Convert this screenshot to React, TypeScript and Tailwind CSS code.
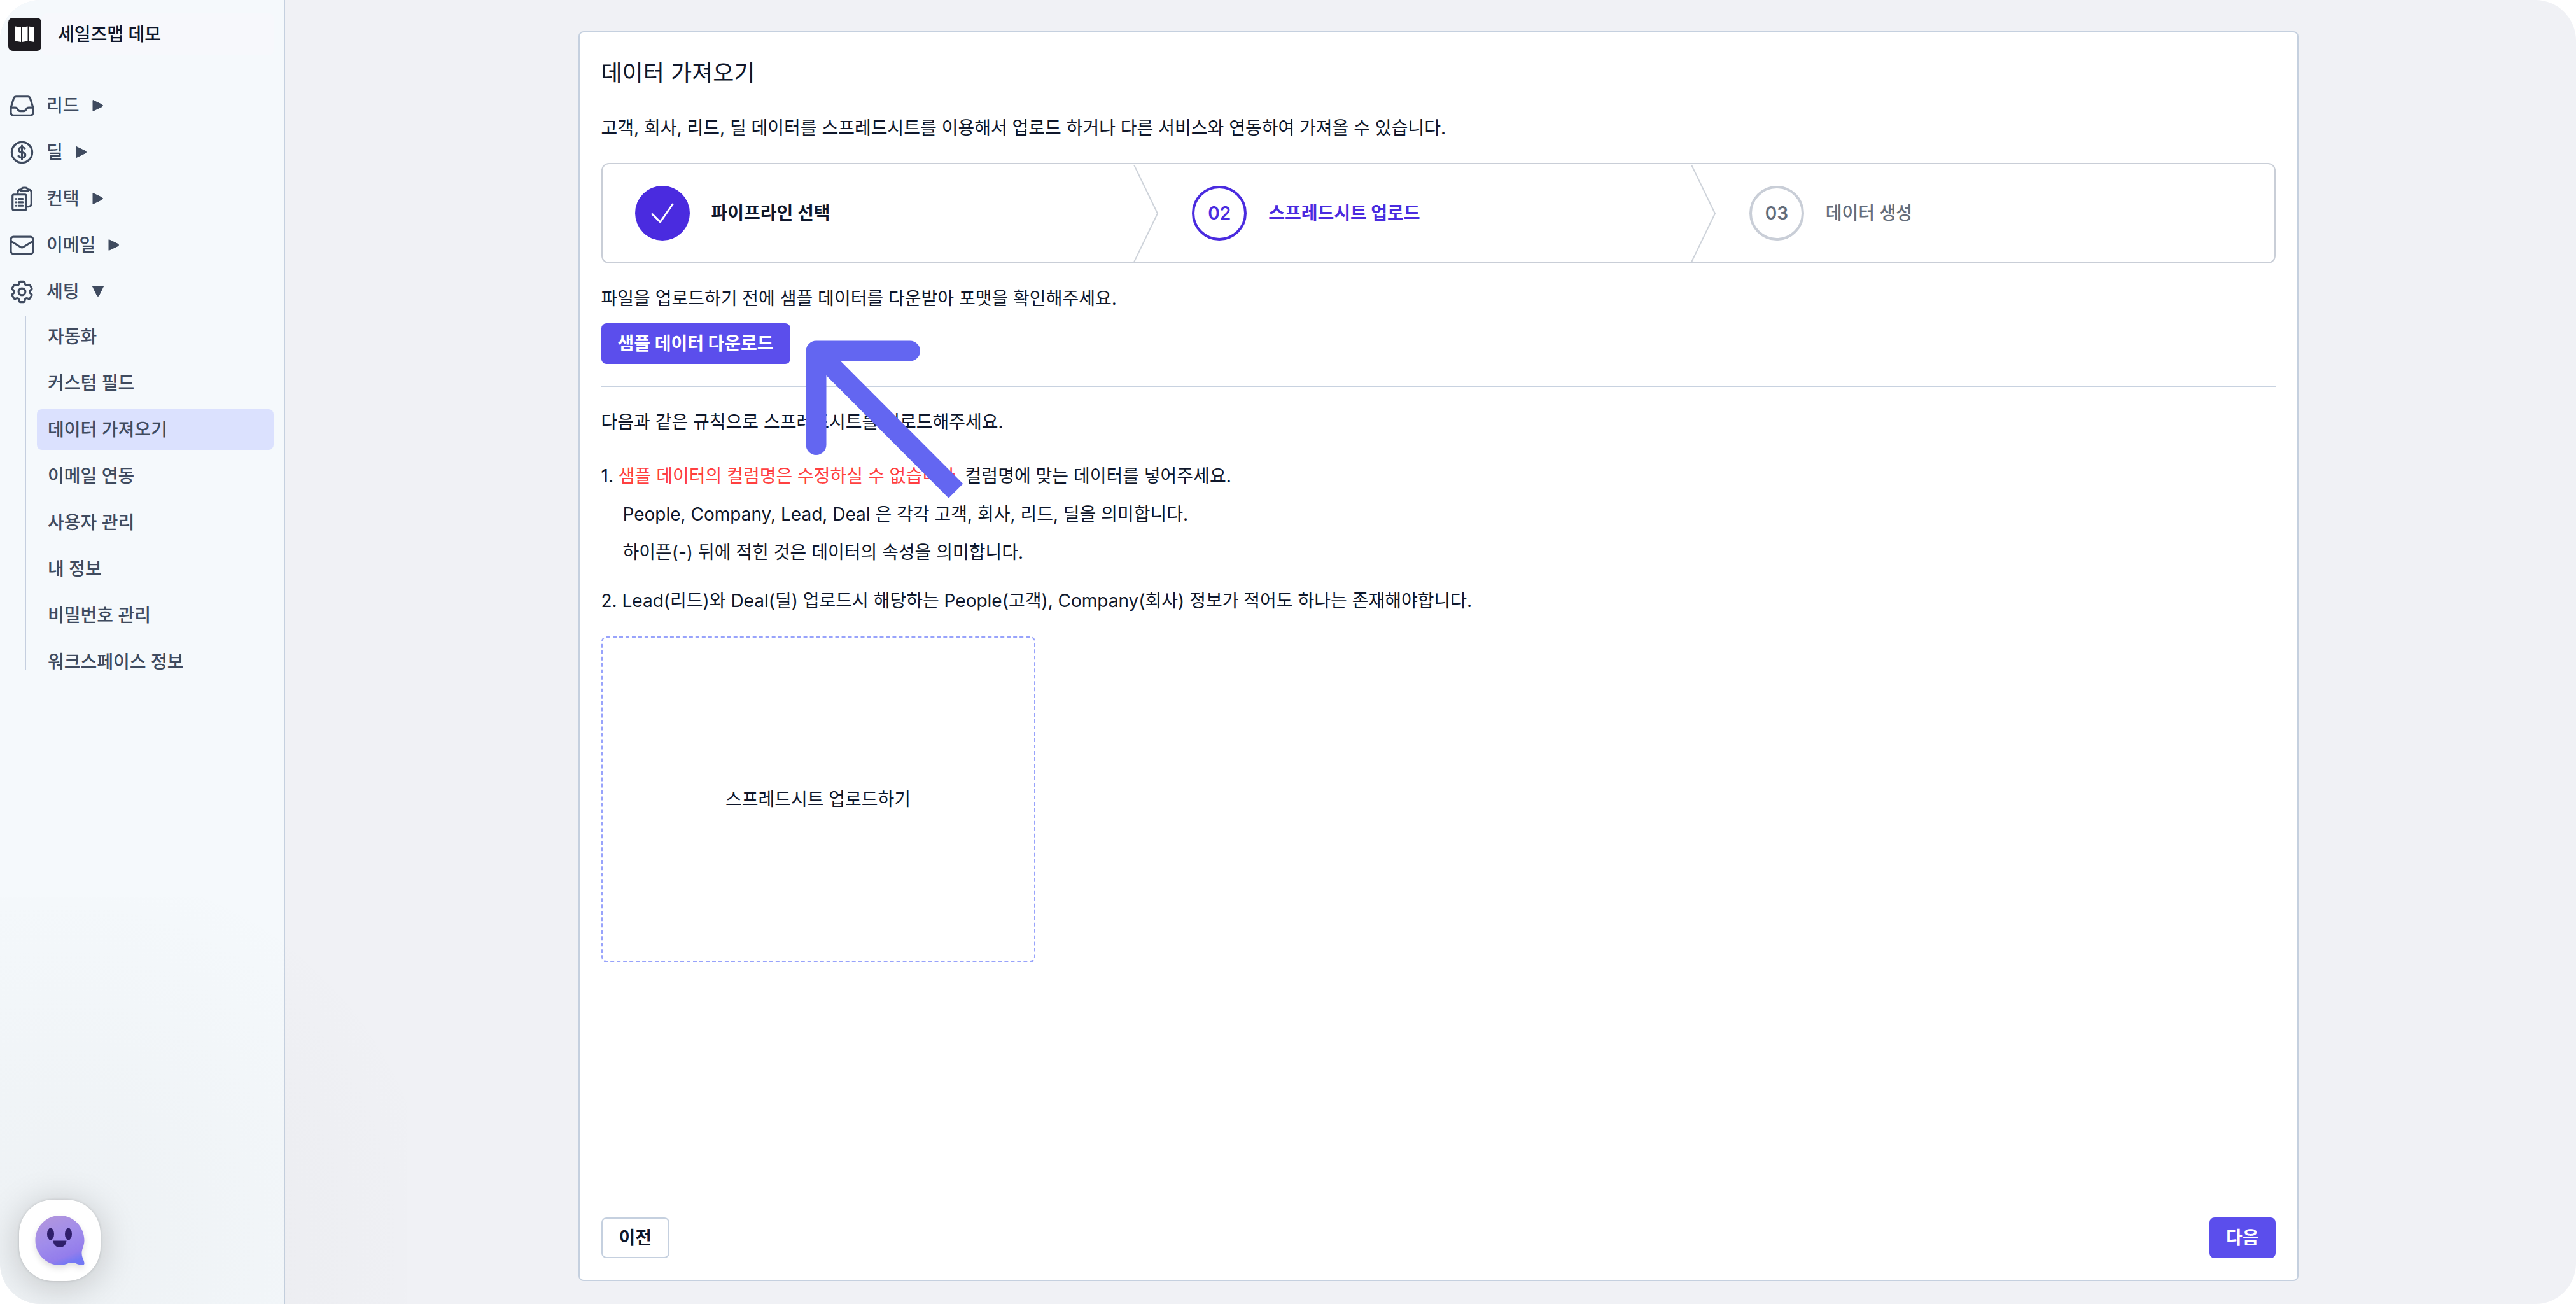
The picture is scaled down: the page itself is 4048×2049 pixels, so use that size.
import type { ComponentType, SVGProps } from "react";
import {
  HiOutlineClipboardDocumentList,
  HiOutlineCog6Tooth,
  HiOutlineCurrencyDollar,
  HiOutlineEnvelope,
  HiOutlineInbox,
} from "react-icons/hi2";

type Icon = ComponentType<SVGProps<SVGSVGElement>>;

const menu: { label: string; icon: Icon; open?: boolean }[] = [
  { label: "리드", icon: HiOutlineInbox as Icon },
  { label: "딜", icon: HiOutlineCurrencyDollar as Icon },
  { label: "컨택", icon: HiOutlineClipboardDocumentList as Icon },
  { label: "이메일", icon: HiOutlineEnvelope as Icon },
  { label: "세팅", icon: HiOutlineCog6Tooth as Icon, open: true },
];

const settings = [
  "자동화",
  "커스텀 필드",
  "데이터 가져오기",
  "이메일 연동",
  "사용자 관리",
  "내 정보",
  "비밀번호 관리",
  "워크스페이스 정보",
];

function Logo() {
  return (
    <svg viewBox="0 0 52 52" className="size-[52px] shrink-0" aria-hidden="true">
      <rect width="52" height="52" rx="7" fill="#1d1b20" />
      <path d="M11 13.5L20 15V38L11 36.5ZM21.5 15L30.500 13.500V36.500L21.500 38ZM32 13.500L41 15V38L32 36.500Z" fill="#fff" />
    </svg>
  );
}

function Caret({ open }: { open?: boolean }) {
  return (
    <svg viewBox="0 0 18 18" className="size-[18px]" fill="currentColor" stroke="currentColor" strokeWidth="1" strokeLinejoin="round" aria-hidden="true">
      <path d={open ? "M0.500 1H17.500L10.500 15.500Q9 17.500 7.500 15.500Z" : "M1 0.500V17.500L15.500 10.500Q17.500 9 15.500 7.500Z"} />
    </svg>
  );
}

function Sidebar() {
  return (
    <aside className="flex w-[448px] shrink-0 flex-col border-r-2 border-[#c5d0df] bg-[#f5f9fc] text-[#3f4b5f]">
      <div className="flex items-center pl-[13px] pr-4 pt-[21px]">
        <Logo />
        <button type="button" className="h-[66px] flex-1 rounded-lg bg-[#f7f8fc] pl-[26px] text-left font-medium text-slate-900">
          세일즈맵 데모
        </button>
      </div>
      <nav className="pt-[47px]">
        <ul className="flex flex-col gap-[9px]">
          {menu.map(({ label, icon: MenuIcon, open }) => (
            <li key={label}>
              <button type="button" aria-expanded={!!open} className="flex h-16 w-full items-center pl-[13px] font-medium">
                <MenuIcon className="size-[43px]" strokeWidth={1.75} aria-hidden="true" />
                <span className="pl-[17px] pr-5">{label}</span>
                <Caret open={open} />
              </button>
            </li>
          ))}
        </ul>
        <div className="relative ml-[39px] mt-[7px] pr-4">
          <span className="absolute bottom-5 left-0 top-0 w-0.5 bg-[#c5cfdf]" aria-hidden="true" />
          <ul className="flex flex-col gap-[9px] pl-[19px]">
            {settings.map((label) => (
              <li key={label}>
                <a
                  href="#"
                  aria-current={label === "데이터 가져오기" ? "page" : undefined}
                  className="flex h-16 items-center rounded-lg pl-[17px] font-medium aria-[current=page]:bg-[#dbe1fe]"
                >
                  {label}
                </a>
              </li>
            ))}
          </ul>
        </div>
      </nav>
    </aside>
  );
}

function Chevron() {
  return (
    <svg viewBox="0 0 43 153" preserveAspectRatio="none" className="h-[153px] w-[43px]" fill="none" stroke="#ced3da" strokeWidth="2" aria-hidden="true">
      <path d="M1 -4L40 76.500L1 157" />
    </svg>
  );
}

function Steps() {
  return (
    <ol className="mt-[34px] grid grid-cols-3 rounded-xl border-2 border-[#c9ced7] font-medium">
      <li className="flex h-[154px] items-center pl-[51px]">
        <span className="flex size-[86px] items-center justify-center rounded-full bg-[#4a2bdf]">
          <svg viewBox="0 0 36 36" className="size-9" fill="none" stroke="#fff" strokeWidth="3" strokeLinecap="round" strokeLinejoin="round" aria-hidden="true">
            <path d="M2 19.500L14.500 32L34 4" />
          </svg>
        </span>
        <span className="flex-1 pl-[34px] font-bold text-slate-900">파이프라인 선택</span>
        <Chevron />
      </li>
      <li className="flex items-center pl-[51px] text-[#4a2bdf]" aria-current="step">
        <span className="flex size-[86px] items-center justify-center rounded-full border-4 border-[#4a2bdf] font-semibold">02</span>
        <span className="flex-1 pl-[34px] font-bold">스프레드시트 업로드</span>
        <Chevron />
      </li>
      <li className="flex items-center pl-[51px] text-[#646d7b]">
        <span className="flex size-[86px] items-center justify-center rounded-full border-4 border-[#c9ced7] font-semibold">03</span>
        <span className="pl-[34px]">데이터 생성</span>
      </li>
    </ol>
  );
}

function PointerArrow() {
  return (
    <svg
      viewBox="0 0 248 248"
      className="pointer-events-none absolute left-full top-[27px] ml-6 size-[248px] max-w-none"
      fill="none"
      stroke="#6366f1"
      strokeWidth="32"
      strokeLinejoin="round"
      aria-hidden="true"
    >
      <path d="M164 16.500H16.500V164" strokeLinecap="round" />
      <path d="M16.500 16.500L236 236.500" />
    </svg>
  );
}

function ChatButton() {
  return (
    <button
      type="button"
      aria-label="채팅 상담"
      className="absolute bottom-9 left-[30px] flex size-32 items-center justify-center rounded-[54px] bg-white shadow-[0_8px_60px_rgba(0,0,0,0.20),0_0_4px_rgba(0,0,0,0.15)]"
    >
      <svg viewBox="0 0 78 78" className="size-[78px] overflow-visible drop-shadow-[0_5px_5px_rgba(0,0,0,0.12)]" aria-hidden="true">
        <defs>
          <linearGradient id="bubble" x1="0.2" y1="0" x2="0.6" y2="1">
            <stop offset="0" stopColor="#b296dd" />
            <stop offset="0.5" stopColor="#a08ceb" />
            <stop offset="0.85" stopColor="#937dec" />
            <stop offset="1" stopColor="#7378f4" />
          </linearGradient>
        </defs>
        <path
          d="M39 0C60.500 0 77.500 17.500 77.500 39C77.500 48 73 53 73.500 60C74 67 77 70 77.500 74.500C77.800 77.500 76 77.500 73 77.500C67 77.500 63 73.500 57 74C51 74.500 48 78 39 78C17.500 78 0.500 60.500 0.500 39C0.500 17.500 17.500 0 39 0Z"
          fill="url(#bubble)"
        />
        <ellipse cx="24.500" cy="29" rx="5.500" ry="9.500" fill="#2f1f6b" />
        <ellipse cx="52.500" cy="29" rx="5.500" ry="9.500" fill="#2f1f6b" />
        <path d="M28.500 39.500H49.500C49 46 44.500 50 39 50C33.500 50 29 46 28.500 39.500Z" fill="#2f1f6b" />
      </svg>
    </button>
  );
}

export default function App() {
  return (
    <div className="bg-white">
      <div className="relative flex min-h-screen overflow-hidden rounded-[64px] bg-[#f0f1f5] font-['Inter','Noto_Sans_CJK_KR',sans-serif] text-[28px] leading-[42px] text-slate-900">
        <Sidebar />
        <main className="flex flex-1 justify-center pb-9 pl-6 pt-[49px]">
          <section className="flex w-full max-w-[2703px] flex-col rounded-lg border-2 border-[#c5d0df] bg-white px-[34px] pb-[34px] pt-[37px]">
            <h1 className="text-4xl leading-[54px] font-normal">데이터 가져오기</h1>
            <p className="mt-[38px]">
              고객, 회사, 리드, 딜 데이터를 스프레드시트를 이용해서 업로드 하거나 다른 서비스와 연동하여 가져올 수 있습니다.
            </p>
            <Steps />
            <p className="mt-[34px]">파일을 업로드하기 전에 샘플 데이터를 다운받아 포맷을 확인해주세요.</p>
            <div className="relative z-10 mt-[18px] self-start">
              <button type="button" className="flex h-16 items-center rounded-lg bg-[#5b4eec] px-[26px] font-bold text-white">
                샘플 데이터 다운로드
              </button>
              <PointerArrow />
            </div>
            <hr className="mt-[34px] border-t-2 border-[#c8d2e0]" />
            <p className="mt-[34px]">다음과 같은 규칙으로 스프레드시트를 업로드해주세요.</p>
            <div className="mt-[43px]">
              <p>
                1. <span className="text-[#ff4040]">샘플 데이터의 컬럼명은 수정하실 수 없습니다.</span> 컬럼명에 맞는 데이터를 넣어주세요.
              </p>
              <p className="mt-[18px] pl-[34px]">People, Company, Lead, Deal 은 각각 고객, 회사, 리드, 딜을 의미합니다.</p>
              <p className="mt-[18px] pl-[34px]">하이픈(-) 뒤에 적힌 것은 데이터의 속성을 의미합니다.</p>
            </div>
            <p className="mt-[34px]">
              2. Lead(리드)와 Deal(딜) 업로드시 해당하는 People(고객), Company(회사) 정보가 적어도 하나는 존재해야합니다.
            </p>
            <button
              type="button"
              className="mt-[35px] flex h-[512px] w-[682px] items-center justify-center rounded-lg border-2 border-dashed border-[#98a3fb]"
            >
              스프레드시트 업로드하기
            </button>
            <div className="mt-auto flex justify-between font-bold">
              <button type="button" className="h-16 rounded-lg border-2 border-[#c5d0df] px-[26px]">
                이전
              </button>
              <button type="button" className="h-16 rounded-lg bg-[#5b4eec] px-[26px] text-white">
                다음
              </button>
            </div>
          </section>
        </main>
        <div className="pointer-events-none absolute bottom-0 left-0 size-[640px] bg-[radial-gradient(circle_at_15%_85%,rgba(60,60,60,0.045),transparent_80%)]" />
        <ChatButton />
      </div>
    </div>
  );
}
